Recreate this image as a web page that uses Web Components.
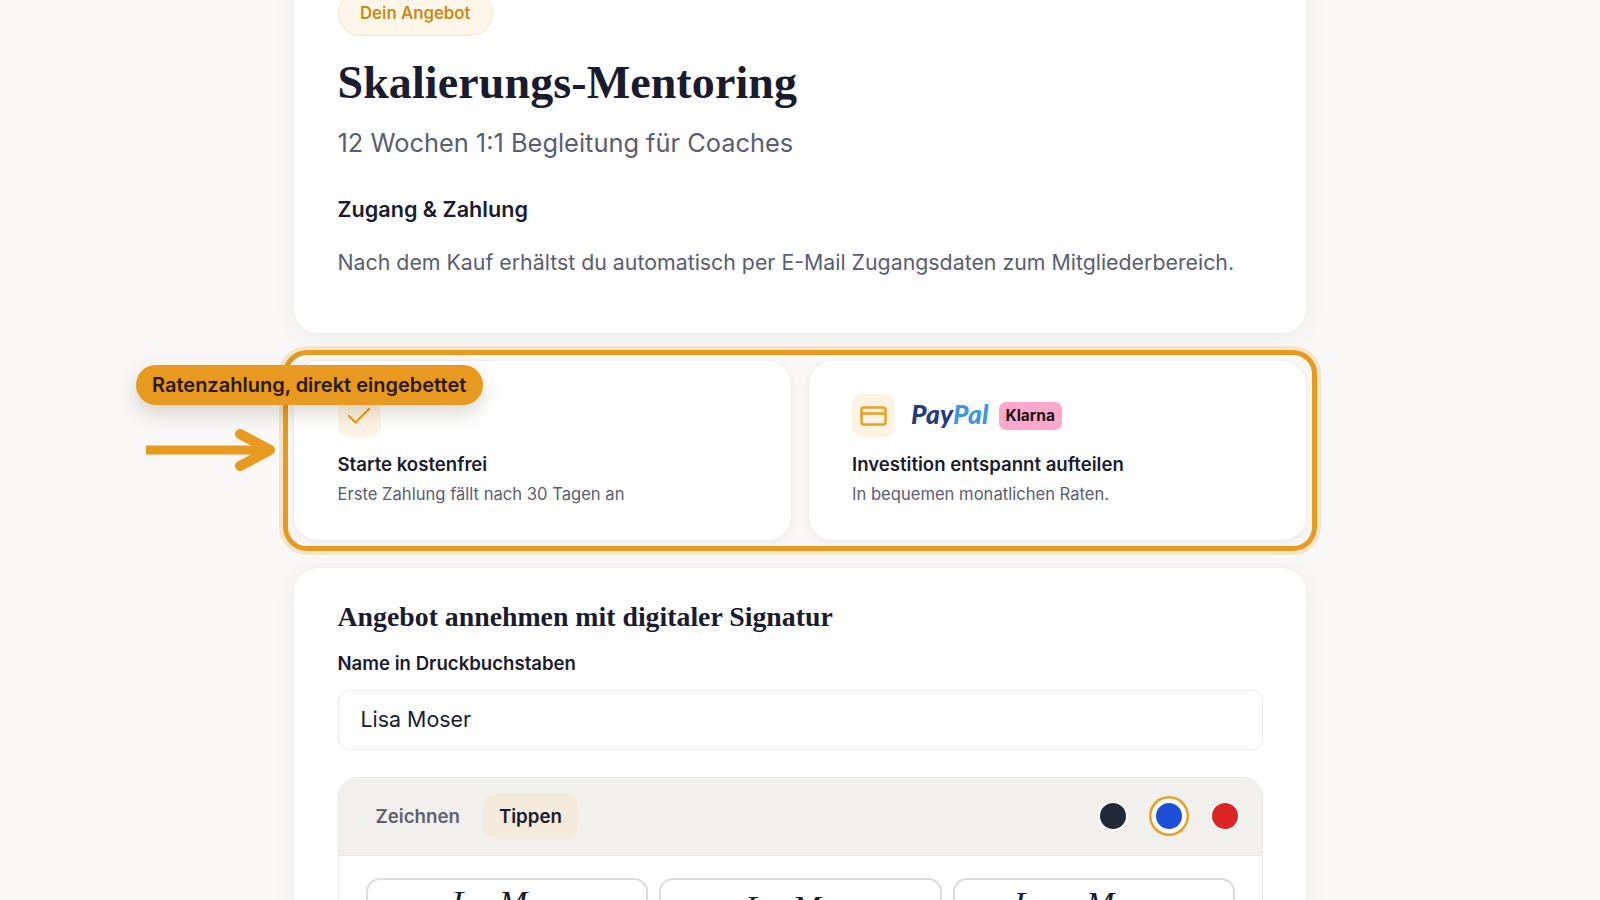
<!doctype html>
<html lang="de">
<head>
<meta charset="utf-8">
<title>Skalierungs-Mentoring</title>
<style>
  html, body { margin: 0; height: 100%; overflow: hidden; background: #f9f8f6; }
  body { font-family: Inter, "Noto Sans", sans-serif; color: #1a1c2e; }
</style>
</head>
<body>
<offer-page>
  <offer-card>
    <offer-badge>Dein Angebot</offer-badge>
    <h1 slot="title">Skalierungs-Mentoring</h1>
    <span slot="sub">12 Wochen 1:1 Begleitung für Coaches</span>
    <span slot="head">Zugang &amp; Zahlung</span>
    <span slot="text">Nach dem Kauf erhältst du automatisch per E-Mail Zugangsdaten zum Mitgliederbereich.</span>
  </offer-card>
  <pay-highlight note="Ratenzahlung, direkt eingebettet">
    <info-card heading="Starte kostenfrei" text="Erste Zahlung fällt nach 30 Tagen an">
      <svg slot="icon" width="24" height="18" viewBox="0 0 24 18" fill="none" stroke="#e8a020" stroke-width="2.4" stroke-linecap="round" stroke-linejoin="round"><path d="M2 9l6.5 6.5L22 2"/></svg>
    </info-card>
    <info-card heading="Investition entspannt aufteilen" text="In bequemen monatlichen Raten.">
      <svg slot="icon" width="27" height="20" viewBox="0 0 27 20" fill="none" stroke="#e8a020" stroke-width="2.5" stroke-linejoin="round"><rect x="1.5" y="1.5" width="24" height="17" rx="2.5"/><path d="M1.5 7.5h24"/></svg>
      <pay-logos slot="logos"></pay-logos>
    </info-card>
  </pay-highlight>
  <sign-card>
    <sign-pad>
      <sign-option top="4"><b>L</b>isa <b>M</b>oser</sign-option>
      <sign-option top="9"><b>L</b>isa <b>M</b>oser</sign-option>
      <sign-option top="5" style="letter-spacing:5px"><b>L</b>isa <b>M</b>oser</sign-option>
    </sign-pad>
  </sign-card>
</offer-page>

<script>
const SERIF = '"Liberation Serif", "DejaVu Serif", serif';

class OfferPage extends HTMLElement {
  constructor() {
    super();
    this.attachShadow({ mode: "open" }).innerHTML = `
      <style>
        :host { display: flex; flex-direction: column; gap: 28px; width: 1012px; margin: -52px auto 0; }
      </style>
      <slot></slot>`;
  }
}

class OfferCard extends HTMLElement {
  constructor() {
    super();
    this.attachShadow({ mode: "open" }).innerHTML = `
      <style>
        :host { display: block; box-sizing: border-box; height: 385px; padding: 43px 43px 0 43.5px; background: #fff; border-radius: 24px; box-shadow: 0 0 0 1px #f0efec, 0 4px 24px rgba(30,25,10,.05); }
        ::slotted(h1) { margin: 20px 0 0; font: 700 46px/54px ${SERIF}; color: #1a1c2e; letter-spacing: .1px; }
        .sub { margin-top: 15px; font-size: 25.4px; line-height: 36px; color: #5a5d72; }
        .head { margin-top: 33px; font-size: 21.6px; line-height: 30px; font-weight: 600; color: #1a1c2e; }
        .text { margin-top: 20px; font-size: 21.33px; line-height: 36px; color: #5a5d72; white-space: nowrap; }
      </style>
      <slot></slot>
      <slot name="title"></slot>
      <div class="sub"><slot name="sub"></slot></div>
      <div class="head"><slot name="head"></slot></div>
      <div class="text"><slot name="text"></slot></div>`;
  }
}

class OfferBadge extends HTMLElement {
  constructor() {
    super();
    this.attachShadow({ mode: "open" }).innerHTML = `
      <style>
        :host { display: inline-block; box-sizing: border-box; height: 45px; padding: 0 21.5px; line-height: 42px; font-size: 16.8px; font-weight: 600; color: #c98a1a; background: #fef6e8; border: 1.5px solid #f8e4c0; border-radius: 23px; }
      </style>
      <slot></slot>`;
  }
}

class PayHighlight extends HTMLElement {
  constructor() {
    super();
    this.attachShadow({ mode: "open" }).innerHTML = `
      <style>
        :host { display: grid; position: relative; grid-template-columns: 1fr 1fr; gap: 18px; height: 179px; }
        .ring { position: absolute; inset: -11px; border: 5.5px solid #e8991f; border-radius: 24px; box-shadow: 0 0 0 4px rgba(232,153,31,.2); pointer-events: none; }
        .note { position: absolute; left: -158px; top: 4px; height: 40px; padding: 0 16.5px 0 16px; line-height: 41px; font-size: 20px; font-weight: 600; white-space: nowrap; color: #2a1a05; background: #e8991f; border-radius: 20px; box-shadow: 0 8px 20px rgba(60,40,0,.18); }
        .arrow { position: absolute; left: -151px; top: 67px; }
      </style>
      <slot></slot>
      <div class="ring"></div>
      <div class="note"></div>
      <svg class="arrow" width="134" height="44" viewBox="0 0 134 44" fill="none" stroke="#e8991f" stroke-linecap="round" stroke-linejoin="round"><path d="M3 22H124" stroke-width="9" stroke-linecap="butt"/><path d="M97 6 127 22 97 38" stroke-width="10"/></svg>`;
    this.shadowRoot.querySelector(".note").textContent = this.getAttribute("note");
  }
}

class InfoCard extends HTMLElement {
  constructor() {
    super();
    this.attachShadow({ mode: "open" }).innerHTML = `
      <style>
        :host { display: block; box-sizing: border-box; padding: 33px 43px 0; background: #fff; border-radius: 24px; box-shadow: 0 0 0 1px #efeeeb, 0 3px 10px rgba(30,25,10,.05); }
        :host(:first-child) { padding-left: 43.5px; }
        .top { display: flex; align-items: center; gap: 16px; height: 43px; }
        .ico { display: flex; align-items: center; justify-content: center; width: 43px; height: 43px; border-radius: 10px; background: #fdf3e4; }
        h3 { margin: 14px 0 0; font-size: 18.6px; line-height: 26px; font-weight: 600; color: #1a1c2e; }
        p { margin: 5px 0 0; font-size: 16.6px; line-height: 24px; color: #5a5d72; }
      </style>
      <div class="top"><div class="ico"><slot name="icon"></slot></div><slot name="logos"></slot></div>
      <h3></h3>
      <p></p>`;
    this.shadowRoot.querySelector("h3").textContent = this.getAttribute("heading");
    this.shadowRoot.querySelector("p").textContent = this.getAttribute("text");
  }
}

class PayLogos extends HTMLElement {
  constructor() {
    super();
    this.attachShadow({ mode: "open" }).innerHTML = `
      <style>
        :host { display: flex; align-items: center; gap: 10px; }
        .pp { font: italic 900 26.4px/1 Lato, "Liberation Sans", sans-serif; color: #253b80; letter-spacing: .2px; margin-top: -2px; }
        .pp span { color: #3f97d8; }
        .kl { box-sizing: border-box; width: 63px; height: 28px; line-height: 28px; text-align: center; border-radius: 7px; background: #ffa8cd; font-size: 15.5px; font-weight: 700; color: #17120f; }
      </style>
      <div class="pp">Pay<span>Pal</span></div>
      <div class="kl">Klarna</div>`;
  }
}

class SignCard extends HTMLElement {
  constructor() {
    super();
    this.attachShadow({ mode: "open" }).innerHTML = `
      <style>
        :host { display: block; box-sizing: border-box; padding: 30px 43px 43px 43.5px; background: #fff; border-radius: 24px; box-shadow: 0 0 0 1px #f0efec, 0 4px 24px rgba(30,25,10,.05); }
        h2 { margin: 0; font: 700 27.8px/38px ${SERIF}; color: #1a1c2e; }
        label { display: block; margin-top: 14px; font-size: 18.6px; line-height: 26px; font-weight: 600; color: #1a1c2e; }
        .input { box-sizing: border-box; height: 60px; margin-top: 14px; padding: 0 22px; line-height: 57px; font-size: 21.4px; color: #1a1c2e; border: 1.5px solid #e8e7e4; border-radius: 12px; }
        .pad { margin-top: 27px; }
      </style>
      <h2>Angebot annehmen mit digitaler Signatur</h2>
      <label>Name in Druckbuchstaben</label>
      <div class="input">Lisa Moser</div>
      <div class="pad"><slot></slot></div>`;
  }
}

class SignPad extends HTMLElement {
  constructor() {
    super();
    this.attachShadow({ mode: "open" }).innerHTML = `
      <style>
        :host { display: block; border: 1.5px solid #e8e7e3; border-radius: 20px; overflow: hidden; }
        .bar { display: flex; align-items: center; gap: 7px; box-sizing: border-box; height: 77.5px; padding: 0 22px 0 21px; background: #f1f0ec; border-bottom: 1.5px solid #e8e7e3; }
        .tab { height: 45px; padding: 0 16px; line-height: 45px; font-size: 18.7px; font-weight: 600; color: #5f6074; border-radius: 10px; }
        .tab.on { color: #1a1c2e; background: #f3eadb; }
        .dots { display: flex; align-items: center; gap: 26px; margin-left: auto; }
        .dot { box-sizing: border-box; width: 30px; height: 30px; border-radius: 50%; border: 2.5px solid #fff; }
        .dot.on { box-shadow: 0 0 0 2.5px #fff, 0 0 0 5px #e8a020; }
        .list { display: grid; grid-template-columns: repeat(3, 1fr); gap: 11px; padding: 22px 27px; background: #fff; }
      </style>
      <div class="bar">
        <div class="tab">Zeichnen</div>
        <div class="tab on">Tippen</div>
        <div class="dots">
          <div class="dot" style="background:#1f2937"></div>
          <div class="dot on" style="background:#1d4ed8"></div>
          <div class="dot" style="background:#dc2626"></div>
        </div>
      </div>
      <div class="list"><slot></slot></div>`;
  }
}

class SignOption extends HTMLElement {
  constructor() {
    super();
    this.attachShadow({ mode: "open" }).innerHTML = `
      <style>
        :host { display: block; box-sizing: border-box; height: 96px; text-align: center; font: italic 20px ${SERIF}; color: #1a1c2e; border: 2px solid #dcdcda; border-radius: 14px; }
        ::slotted(b) { font-size: 34px; font-weight: 400; }
      </style>
      <slot></slot>`;
  }
  connectedCallback() {
    this.style.paddingTop = this.getAttribute("top") + "px";
  }
}

customElements.define("offer-page", OfferPage);
customElements.define("offer-card", OfferCard);
customElements.define("offer-badge", OfferBadge);
customElements.define("pay-highlight", PayHighlight);
customElements.define("info-card", InfoCard);
customElements.define("pay-logos", PayLogos);
customElements.define("sign-card", SignCard);
customElements.define("sign-pad", SignPad);
customElements.define("sign-option", SignOption);
</script>
</body>
</html>
